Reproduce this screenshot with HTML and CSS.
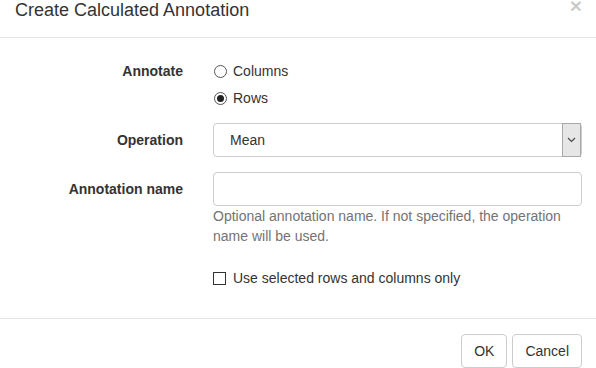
FILE: index.html
```html
<!DOCTYPE html>
<html lang="en">
<head>
    <meta charset="UTF-8">
    <title>Create Calculated Annotation</title>
    <link rel="stylesheet" href="styles.css">
</head>
<body>
    <div class="modal">
        <div class="modal-header">
            <button class="close" type="button">&times;</button>
            <h4 class="modal-title">Create Calculated Annotation</h4>
        </div>
        <div class="modal-body">
            <div class="form-group">
                <label class="control-label">Annotate</label>
                <div class="controls">
                    <div class="radio"><span class="radio-mark"></span>Columns</div>
                    <div class="radio"><span class="radio-mark checked"></span>Rows</div>
                </div>
            </div>
            <div class="form-group">
                <label class="control-label">Operation</label>
                <div class="controls">
                    <div class="select">
                        <span class="select-value">Mean</span>
                        <span class="select-arrow">
                            <svg width="9" height="6" viewBox="0 0 9 6"><path d="M1 1 L4.5 4.5 L8 1" fill="none" stroke="#444" stroke-width="1.1"/></svg>
                        </span>
                    </div>
                </div>
            </div>
            <div class="form-group">
                <label class="control-label">Annotation name</label>
                <div class="controls">
                    <div class="input"></div>
                    <p class="help-block">Optional annotation name. If not specified, the operation name will be used.</p>
                </div>
            </div>
            <div class="form-group last">
                <div></div>
                <div class="controls">
                    <div class="checkbox"><span class="check-mark"></span>Use selected rows and columns only</div>
                </div>
            </div>
        </div>
        <div class="modal-footer">
            <button class="btn" type="button">OK</button>
            <button class="btn" type="button">Cancel</button>
        </div>
    </div>
</body>
</html>
```

FILE: styles.css
```css
body {
    margin: 0;
    background-color: #fff;
    color: #333;
    font-family: 'Liberation Sans', Arial, sans-serif;
    font-size: 14px;
    line-height: 20px;
    overflow: hidden;
}
.modal {
    width: 596px;
}
.modal-header {
    height: 37px;
    padding: 0 15px;
    border-bottom: 1px solid #e5e5e5;
}
.modal-title {
    margin: 0;
    font-size: 18px;
    font-weight: normal;
    line-height: 20px;
}
.close {
    float: right;
    margin: 0 -1px 0 0;
    padding: 0;
    background: none;
    border: 0;
    font-family: 'Liberation Sans', Arial, sans-serif;
    font-size: 21px;
    font-weight: bold;
    line-height: 10px;
    height: 12px;
    color: #000;
    opacity: 0.2;
}
.modal-body {
    padding: 16px 0 30px;
}
.form-group {
    display: grid;
    grid-template-columns: 198px 1fr;
    margin-bottom: 15px;
}
.form-group.last {
    margin-bottom: 0;
}
.control-label {
    padding: 7px 15px 0 0;
    text-align: right;
    font-weight: bold;
}
.controls {
    padding: 0 14px 0 15px;
}
.radio,
.checkbox {
    display: flex;
    align-items: center;
    padding-top: 7px;
    height: 20px;
}
.radio-mark {
    box-sizing: border-box;
    width: 13px;
    height: 13px;
    margin: 0 6px 0 1px;
    border: 1px solid #555;
    border-radius: 50%;
    position: relative;
}
.radio-mark.checked::after {
    content: '';
    position: absolute;
    left: 2px;
    top: 2px;
    width: 7px;
    height: 7px;
    border-radius: 50%;
    background-color: #222;
}
.check-mark {
    box-sizing: border-box;
    width: 13px;
    height: 13px;
    margin: 0 7px 0 0;
    border: 1px solid #333;
}
.select {
    box-sizing: border-box;
    height: 34px;
    display: flex;
    border: 1px solid #ccc;
    border-radius: 4px;
}
.select-value {
    flex: 1;
    padding: 6px 16px;
}
.select-arrow {
    width: 17px;
    margin: -1px 0 -1px;
    display: flex;
    align-items: center;
    justify-content: center;
    background-color: #e6e6e6;
    border: 1px solid #a9a9a9;
}
.input {
    box-sizing: border-box;
    height: 34px;
    border: 1px solid #ccc;
    border-radius: 4px;
}
.help-block {
    margin: 0;
    color: #737373;
    line-height: 20px;
}
.modal-footer {
    padding: 15px 14px;
    border-top: 1px solid #e5e5e5;
    display: flex;
    justify-content: flex-end;
    gap: 5px;
}
.btn {
    height: 34px;
    padding: 6px 12px;
    background-color: #fff;
    border: 1px solid #ccc;
    border-radius: 4px;
    color: #333;
    font-family: 'Liberation Sans', Arial, sans-serif;
    font-size: 14px;
    line-height: 20px;
}
```
